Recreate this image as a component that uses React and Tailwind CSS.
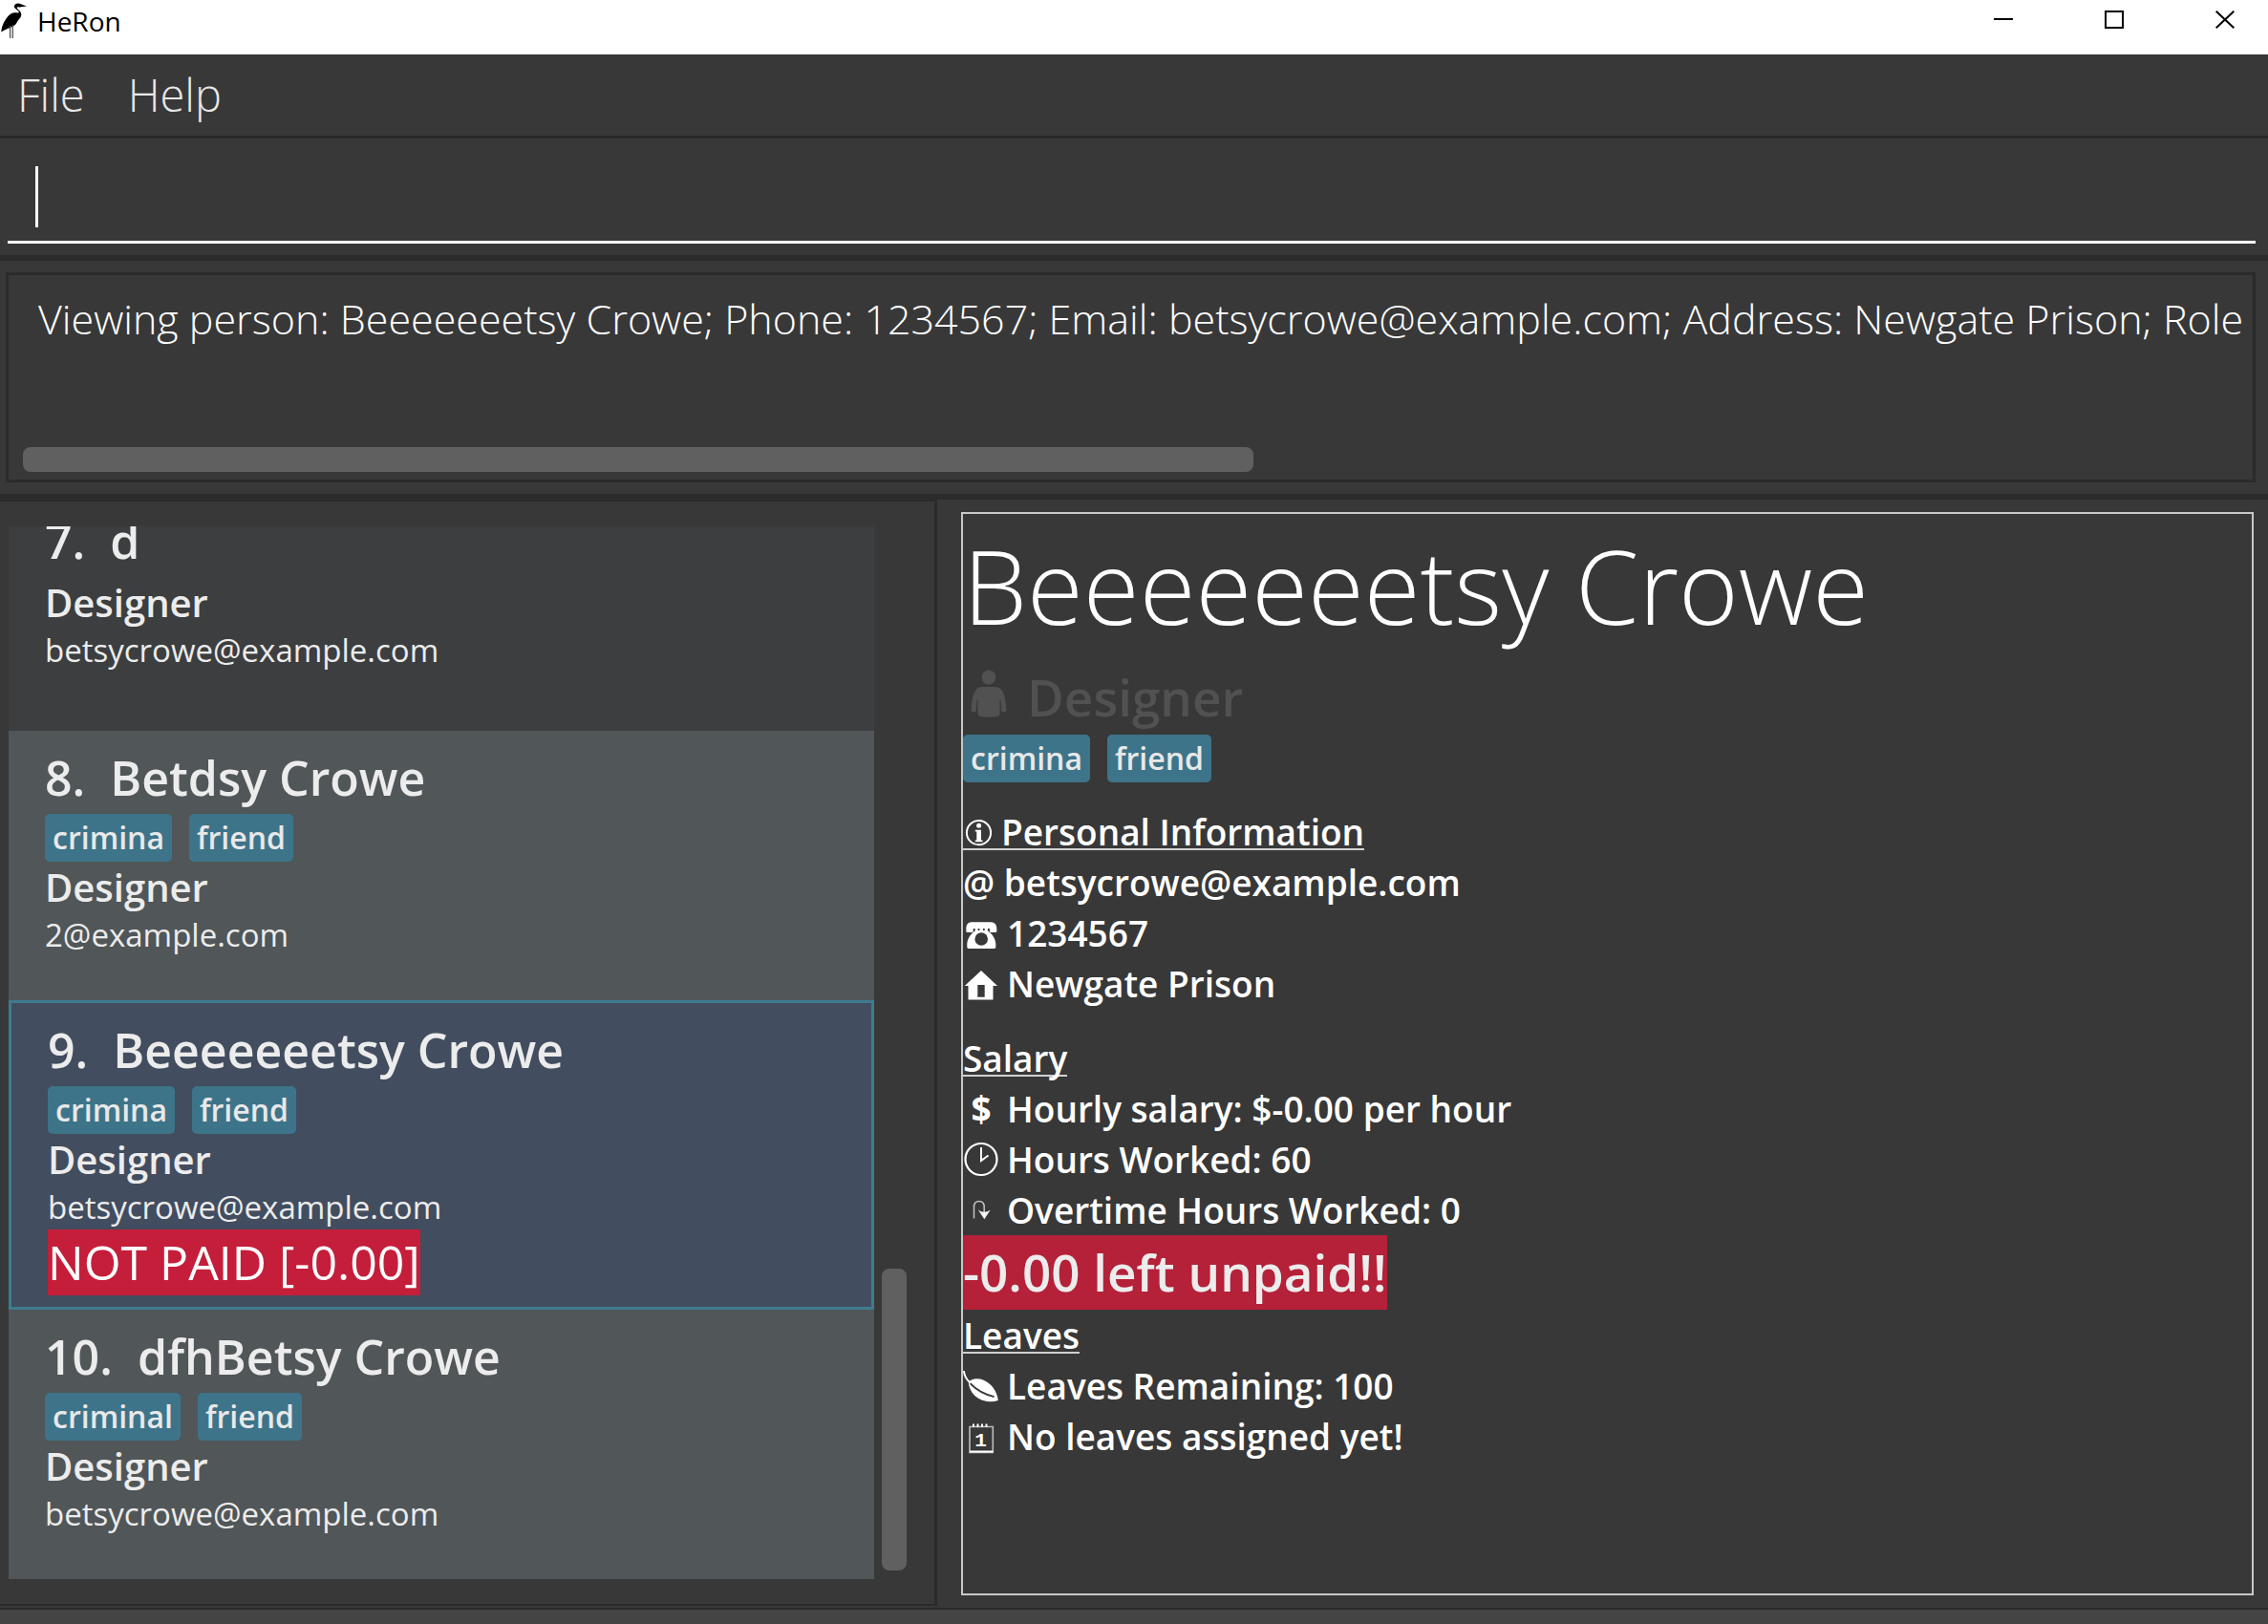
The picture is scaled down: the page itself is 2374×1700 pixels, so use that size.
const people = [
  { id: 7, name: "d", tags: [], role: "Designer", email: "betsycrowe@example.com", tone: "bg-[#3c3e3f] pb-[61px]" },
  { id: 8, name: "Betdsy Crowe", tags: ["crimina", "friend"], role: "Designer", email: "2@example.com", tone: "bg-[#515658] pb-[45px]" },
  {
    id: 9,
    name: "Beeeeeeetsy Crowe",
    tags: ["crimina", "friend"],
    role: "Designer",
    email: "betsycrowe@example.com",
    unpaid: "NOT PAID [-0.00]",
    tone: "bg-[#424d5f] border-[3px] border-[#3e7b91] pb-3",
  },
  { id: 10, name: "dfhBetsy Crowe", tags: ["criminal", "friend"], role: "Designer", email: "betsycrowe@example.com", tone: "bg-[#515658] pb-[45px]" },
];

function Tags({ items }) {
  return (
    <div className="flex gap-[18px] text-[32px] leading-[50px] font-semibold text-[#e8e8e8]">
      {items.map((t) => (
        <span key={t} className="rounded-[5px] bg-[#3e7489] px-2">
          {t}
        </span>
      ))}
    </div>
  );
}

function PersonCard({ p }) {
  return (
    <li className={`shrink-0 pt-[15px] pl-[38px] text-[#ececec] ${p.tone}`}>
      <h2 className="mb-1 flex gap-[26px] text-[50px] leading-[68px] font-semibold">
        <span>{p.id}.</span>
        <span>{p.name}</span>
      </h2>
      {p.tags.length > 0 && <Tags items={p.tags} />}
      <p className="text-[40px] leading-[54px] font-semibold">{p.role}</p>
      <p className="text-[33px] leading-[46px]">{p.email}</p>
      {p.unpaid && <p className="w-fit bg-[#c41e3a] text-[50px] leading-[69px] text-white">{p.unpaid}</p>}
    </li>
  );
}

function Icon({ children }) {
  return (
    <svg className="h-[37px] w-9 shrink-0 overflow-visible" viewBox="0 0 36 37" fill="none" stroke="none" aria-hidden="true">
      {children}
    </svg>
  );
}

function PhoneIcon() {
  return (
    <Icon>
      <path
        fill="#fff"
        d="M9 7.3h20c4.500 0 6.300 3.200 6.300 7v2.200c0 1-.6 1.500-1.500 1.500h-4.600c-.9 0-1.300-.5-1.300-1.400v-2.700h-2v2.600c4.500 2.500 8.400 8.500 8.400 14v2.800c0 1.100-.6 1.700-1.700 1.700H6c-1.100 0-1.700-.6-1.700-1.700v-2.800c0-5.500 3.900-11.500 8.400-14v-2.600h-2v2.700c0 .9-.4 1.400-1.300 1.400H4.800c-.9 0-1.500-.5-1.500-1.500v-2.200c0-3.800 1.700-7 5.700-7z"
      />
      <path fill="#383838" d="M15.600 13.900h1.800v2h-1.800zM20.900 13.900h1.800v2h-1.800z" />
      <circle cx="19.200" cy="25" r="6.800" fill="#383838" />
    </Icon>
  );
}

function HomeIcon() {
  return (
    <Icon>
      <path fill="#fff" fillRule="evenodd" d="M19 5 36 21h-4.500v14.500h-26V21H1.800zM15.300 20v12.700h7.400V20z" />
    </Icon>
  );
}

function ClockIcon() {
  return (
    <Icon>
      <circle cx="19" cy="18.500" r="16.500" stroke="#fff" strokeWidth="2.200" />
      <path stroke="#fff" strokeWidth="2" d="M19 6v14l7.500-5.500" />
    </Icon>
  );
}

function TurnIcon() {
  return (
    <Icon>
      <path stroke="#c4c4c4" strokeWidth="1.500" d="M11.500 27.500V15.500c0-3.600 2-6 5.300-6s5.400 2.400 5.400 6V21" />
      <path fill="#f4f4f4" d="M15.800 18.500c2.300 1.700 4.300 2.200 6.400 2.200s4.200-.5 6.500-2.200l-6.300 9.700z" />
    </Icon>
  );
}

function LeafIcon() {
  return (
    <Icon>
      <path stroke="#fff" strokeWidth="2" d="M.8 3c.6 5 2.700 9 6.500 12.300" />
      <path
        fill="#fff"
        d="M5.800 14.600c3.700-3.600 10-4.300 15.800-1.800C29 16 35.600 23.500 36.800 34c-7 2.200-14.800 1.600-20.800-2.200C10 28 6 21.800 5.800 14.600z"
      />
      <path stroke="#383838" strokeWidth="1.800" d="M7.600 16.200c5.500 6 13.500 11 25 14" />
    </Icon>
  );
}

function CalendarIcon() {
  return (
    <Icon>
      <path stroke="#bdbdbd" strokeWidth="1.600" d="M7 8.500h24.300v27H7z" />
      <path stroke="#fff" strokeWidth="2" d="M7 34.500h24.300M11 5.500v3.500M15.500 5.500v3.500M20 5.500v3.500M24.500 5.500v3.500" />
      <text x="18.600" y="28.500" textAnchor="middle" className='fill-white font-["Liberation_Mono",monospace] text-[21px] font-bold'>
        1
      </text>
    </Icon>
  );
}

function InfoIcon() {
  return (
    <svg className="h-[37px] w-8 shrink-0 overflow-visible" viewBox="0 0 32 37" fill="none" aria-hidden="true">
      <circle cx="16.500" cy="20.700" r="12.600" stroke="#fff" strokeWidth="2" />
      <circle cx="16.600" cy="13.300" r="2.500" fill="#fff" />
      <path fill="#fff" d="M12.800 17.800h6.200v10.700h1.500v1.800h-7.700v-1.800h1.500v-8.900h-1.500z" />
    </svg>
  );
}

function PersonIcon() {
  return (
    <svg className="h-[52px] w-[52px] shrink-0" viewBox="0 0 52 52" aria-hidden="true">
      <g fill="#515151">
        <circle cx="27" cy="9" r="7.400" />
        <path d="M20 19h14c7 0 11 8.500 11.300 24.500 0 1-.7 1.500-1.600 1.500h-1.900c-.9 0-1.400-.5-1.500-1.500l-.9-10.500h-.9V47c0 2-1.500 3-4 3.300-5 .6-10 .6-15 0-2.500-.3-4-1.300-4-3.300V33h-.9l-.9 10.500c-.1 1-.6 1.500-1.500 1.500h-1.900c-.9 0-1.600-.5-1.600-1.500C8.900 27.500 13 19 20 19z" />
      </g>
    </svg>
  );
}

function HeronIcon() {
  return (
    <svg className="h-[44px] w-[30px] shrink-0" viewBox="0 0 30 44" aria-hidden="true">
      <path
        fill="#000"
        d="M16 4.600c1.600-1.300 4-1.300 5.700-.3l6.300 2.200-6 .7c-1.200.5-2.200.3-3.200 0-1.300.2-1.300 1.300-.5 2.100 1.700 1.500 4 3 4 6 0 3-2 4.200-3.500 6.200-1.600 3-3.200 5.500-5.900 6.500l-3 1.200c-2.700 1.300-5 1.800-8.600 4.300 0-4 1.700-8.500 4.200-12.500 2.300-3.800 5.500-7.600 9.700-7.800 1.800-.1 4.600.8 4.700-.4 0-1.800-4.600-3.400-5-5.600-.1-1 .3-1.900 1.100-2.600z"
      />
      <path stroke="#555" strokeWidth="1.300" fill="none" d="M10.600 27v13M13.300 26v14" />
    </svg>
  );
}

function Line({ icon, children }) {
  return (
    <p className="flex items-center gap-[10px]">
      {icon}
      <span>{children}</span>
    </p>
  );
}

function Heading({ children }) {
  return (
    <h3 className="mb-[7px] flex h-[46px] w-fit gap-2 border-b-2 border-[#d0d0d0]">
      {children}
    </h3>
  );
}

export default function App() {
  return (
    <div className='flex h-screen flex-col overflow-hidden bg-[#383838] font-["Open_Sans","Noto_Sans",sans-serif]'>
      <header className="flex h-[57px] shrink-0 justify-between bg-white pr-[35px] text-black">
        <div className="flex gap-[9px]">
          <HeronIcon />
          <h1 className="text-[28px] leading-[44px]">HeRon</h1>
        </div>
        <div className="flex items-start gap-24 pt-[11px]">
          <button type="button" aria-label="Minimize">
            <svg className="size-5" viewBox="0 0 20 20" stroke="#000" strokeWidth="2" fill="none"><path d="M0 9h20" /></svg>
          </button>
          <button type="button" aria-label="Maximize">
            <svg className="size-5" viewBox="0 0 20 20" stroke="#000" strokeWidth="2" fill="none"><path d="M1 1h18v17H1z" /></svg>
          </button>
          <button type="button" aria-label="Close">
            <svg className="size-5" viewBox="0 0 20 20" stroke="#000" strokeWidth="2" fill="none"><path d="m.7.7 18.600 17.600M19.300.7.7 18.300" /></svg>
          </button>
        </div>
      </header>

      <nav className="flex h-[88px] shrink-0 gap-[45px] border-b-[3px] border-[#2a2a2a] pl-[18px] text-[47px] font-light text-[#e8e8e8]">
        <button type="button">File</button>
        <button type="button">Help</button>
      </nav>

      <div className="shrink-0 border-b-[6px] border-[#2b2b2b] pr-[13px] pb-3 pl-2">
        <div className="flex h-[110px] border-b-[3px] border-white pt-[29px] pl-[29px]">
          <span className="h-16 w-[3px] bg-white" />
          <input type="text" aria-label="Command" className="h-16 flex-1 bg-transparent text-[43px] font-light text-white caret-transparent outline-none" />
        </div>
      </div>

      <div className="shrink-0 border-b-[6px] border-[#2b2b2b] pt-3 pr-[13px] pb-3 pl-[6px]">
        <div className="flex h-[220px] flex-col justify-between border-[3px] border-[#2b2b2b] pt-[17px] pr-[2px] pb-2 pl-[15px]">
          <p className="overflow-hidden pl-4 text-[43px] leading-[58px] font-light whitespace-nowrap text-white">
            Viewing person: Beeeeeeetsy Crowe; Phone: 1234567; Email: betsycrowe@example.com; Address: Newgate Prison; Role
          </p>
          <div className="h-[26px] w-[1288px] rounded-lg bg-[#606060]" />
        </div>
      </div>

      <main className="flex min-h-0 flex-1 border-b-2 border-[#2b2b2b]">
        <section aria-label="People" className="mb-[2px] flex w-[981px] shrink-0 border-t-2 border-r-[3px] border-b-2 border-[#2b2b2b] pt-[26px] pr-[29px] pb-[26px] pl-[9px]">
          <ul className="flex min-w-0 flex-1 flex-col justify-end overflow-hidden">
            {people.map((p) => (
              <PersonCard key={p.id} p={p} />
            ))}
          </ul>
          <div className="ml-2 flex w-[26px] flex-col justify-end pb-[9px]">
            <div className="h-[316px] rounded-lg bg-[#606060]" />
          </div>
        </section>

        <section aria-label="Person details" className="mt-[13px] mr-[15px] mb-[13px] ml-[25px] flex-1 border-2 border-[#c8c8c8] pt-[2px] text-[37px] leading-[53px] font-semibold text-white">
          <h2 className="text-[107px] leading-[146px] font-light">Beeeeeeetsy Crowe</h2>
          <p className="mt-[5px] flex gap-[15px] text-[53px] leading-[78px] text-[#515151]">
            <span className="pt-[9px]"><PersonIcon /></span>
            <span>Designer</span>
          </p>
          <Tags items={["crimina", "friend"]} />

          <div className="mt-[25px]">
            <Heading>
              <span className="pt-[7px]"><InfoIcon /></span>
              <span>Personal Information</span>
            </Heading>
            <p>@ betsycrowe@example.com</p>
            <Line icon={<PhoneIcon />}>1234567</Line>
            <Line icon={<HomeIcon />}>Newgate Prison</Line>
          </div>

          <div className="mt-[25px]">
            <Heading>Salary</Heading>
            <Line icon={<span className="w-9 pl-[2px] text-center font-bold">$</span>}>Hourly salary: $-0.00 per hour</Line>
            <Line icon={<ClockIcon />}>Hours Worked: 60</Line>
            <Line icon={<TurnIcon />}>Overtime Hours Worked: 0</Line>
            <p className="w-fit bg-[#b42138] text-[53px] leading-[78px] text-[#ececec]">-0.00 left unpaid!!</p>
          </div>

          <div>
            <Heading>Leaves</Heading>
            <Line icon={<LeafIcon />}>Leaves Remaining: 100</Line>
            <Line icon={<CalendarIcon />}>No leaves assigned yet!</Line>
          </div>
        </section>
      </main>
      <footer className="h-[15px] shrink-0 bg-[#444444]" />
    </div>
  );
}
